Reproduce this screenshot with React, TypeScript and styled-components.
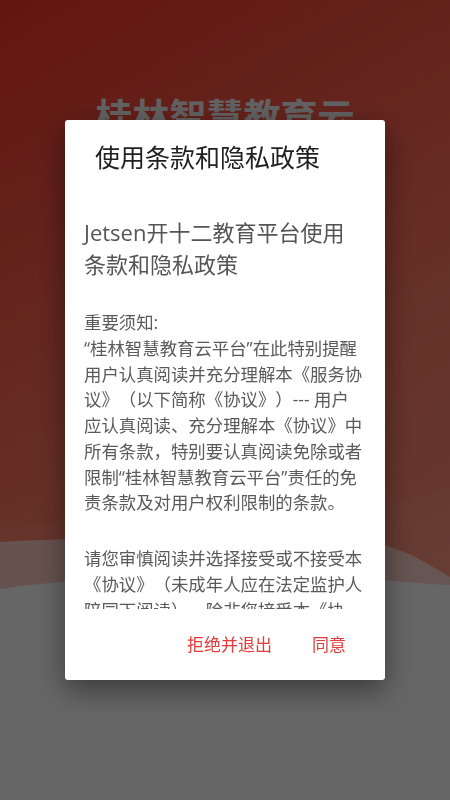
import React from "react";
import styled, { createGlobalStyle } from "styled-components";

const GlobalStyle = createGlobalStyle`
  html, body {
    margin: 0;
    padding: 0;
  }
  body {
    font-family: "Open Sans", "Noto Sans CJK SC", sans-serif;
    -webkit-font-smoothing: antialiased;
    text-spacing-trim: space-all;
  }
`;

const Page = styled.div`
  position: relative;
  width: 100%;
  height: 800px;
  display: flex;
  flex-direction: column;
  overflow: hidden;
  background: linear-gradient(150deg, #f8342a 0%, #ff7a62 50%, #ffa38a 100%);
`;

const Header = styled.div`
  height: 480px;
  display: flex;
  justify-content: center;
  padding-top: 93px;
  box-sizing: border-box;
`;

const AppTitle = styled.h1`
  margin: 0;
  max-width: 280px;
  text-align: center;
  font-size: 37px;
  line-height: 48px;
  font-weight: 700;
  color: #f4f4f4;
`;

const Waves = styled.svg`
  display: block;
  width: 100%;
  height: 120px;
`;

const Ground = styled.div`
  flex: 1;
  background: #ffffff;
`;

const Overlay = styled.div`
  position: fixed;
  inset: 0;
  background: rgba(0, 0, 0, 0.6);
  display: flex;
  align-items: center;
  justify-content: center;
`;

const Dialog = styled.div`
  width: 320px;
  height: 560px;
  background: #ffffff;
  border-radius: 3px;
  box-shadow: 0 10px 30px rgba(0, 0, 0, 0.45);
  display: flex;
  flex-direction: column;
  overflow: hidden;
`;

const DialogTitle = styled.h2`
  margin: 0;
  padding: 21px 30px 0;
  font-size: 25px;
  line-height: 32px;
  font-weight: 400;
  color: #212121;
`;

const Scroll = styled.div`
  flex: 1;
  overflow: hidden;
  padding: 43px 19px 0;
`;

const Heading = styled.h3`
  margin: 0 0 30px;
  font-size: 22px;
  line-height: 32px;
  font-weight: 400;
  color: #555555;
`;

const Paragraph = styled.p`
  margin: 0 0 30px;
  font-size: 17.4px;
  line-height: 25.75px;
  color: #5a5a5a;
  white-space: nowrap;
`;

const Line = styled.span`
  display: block;
`;

const Actions = styled.div`
  height: 71px;
  flex-shrink: 0;
  display: flex;
  align-items: center;
  justify-content: flex-end;
  gap: 24px;
  padding-right: 31px;
`;

const ActionButton = styled.button`
  border: none;
  background: none;
  padding: 8px;
  font-family: inherit;
  font-size: 17px;
  line-height: 24px;
  color: #e53a3a;
  cursor: pointer;
`;

const heading = ["Jetsen开十二教育平台使用", "条款和隐私政策"];

const paragraphs = [
  [
    "重要须知:",
    "“桂林智慧教育云平台”在此特别提醒",
    "用户认真阅读并充分理解本《服务协",
    "议》（以下简称《协议》）--- 用户",
    "应认真阅读、充分理解本《协议》中",
    "所有条款，特别要认真阅读免除或者",
    "限制“桂林智慧教育云平台”责任的免",
    "责条款及对用户权利限制的条款。",
  ],
  [
    "请您审慎阅读并选择接受或不接受本",
    "《协议》（未成年人应在法定监护人",
    "陪同下阅读），除非您接受本《协",
    "议》所有条款，否则您无权注册、登",
    "录或使用本协议所涉服务。",
  ],
];

const App: React.FC = () => (
  <>
    <GlobalStyle />
    <Page>
      <Header>
        <AppTitle>桂林智慧教育云平台</AppTitle>
      </Header>
      <Waves viewBox="0 0 450 120" preserveAspectRatio="none">
        <path
          d="M0 45 C150 40 300 34 384 23 C410 19 430 12 450 8 L450 120 L0 120 Z"
          fill="#ffffff"
          opacity="0.06"
        />
        <path
          d="M0 62 C120 56 300 52 384 65 C410 72 430 85 450 97 L450 120 L0 120 Z"
          fill="#ffffff"
          opacity="0.6"
        />
        <path
          d="M0 109 C60 100 200 88 300 94 C370 98 420 104 450 105 L450 120 L0 120 Z"
          fill="#ffffff"
        />
      </Waves>
      <Ground />
    </Page>
    <Overlay>
      <Dialog>
        <DialogTitle>使用条款和隐私政策</DialogTitle>
        <Scroll>
          <Heading>
            {heading.map((l) => (
              <Line key={l}>{l}</Line>
            ))}
          </Heading>
          {paragraphs.map((p, i) => (
            <Paragraph key={i}>
              {p.map((l) => (
                <Line key={l}>{l}</Line>
              ))}
            </Paragraph>
          ))}
        </Scroll>
        <Actions>
          <ActionButton>拒绝并退出</ActionButton>
          <ActionButton>同意</ActionButton>
        </Actions>
      </Dialog>
    </Overlay>
  </>
);

export default App;
